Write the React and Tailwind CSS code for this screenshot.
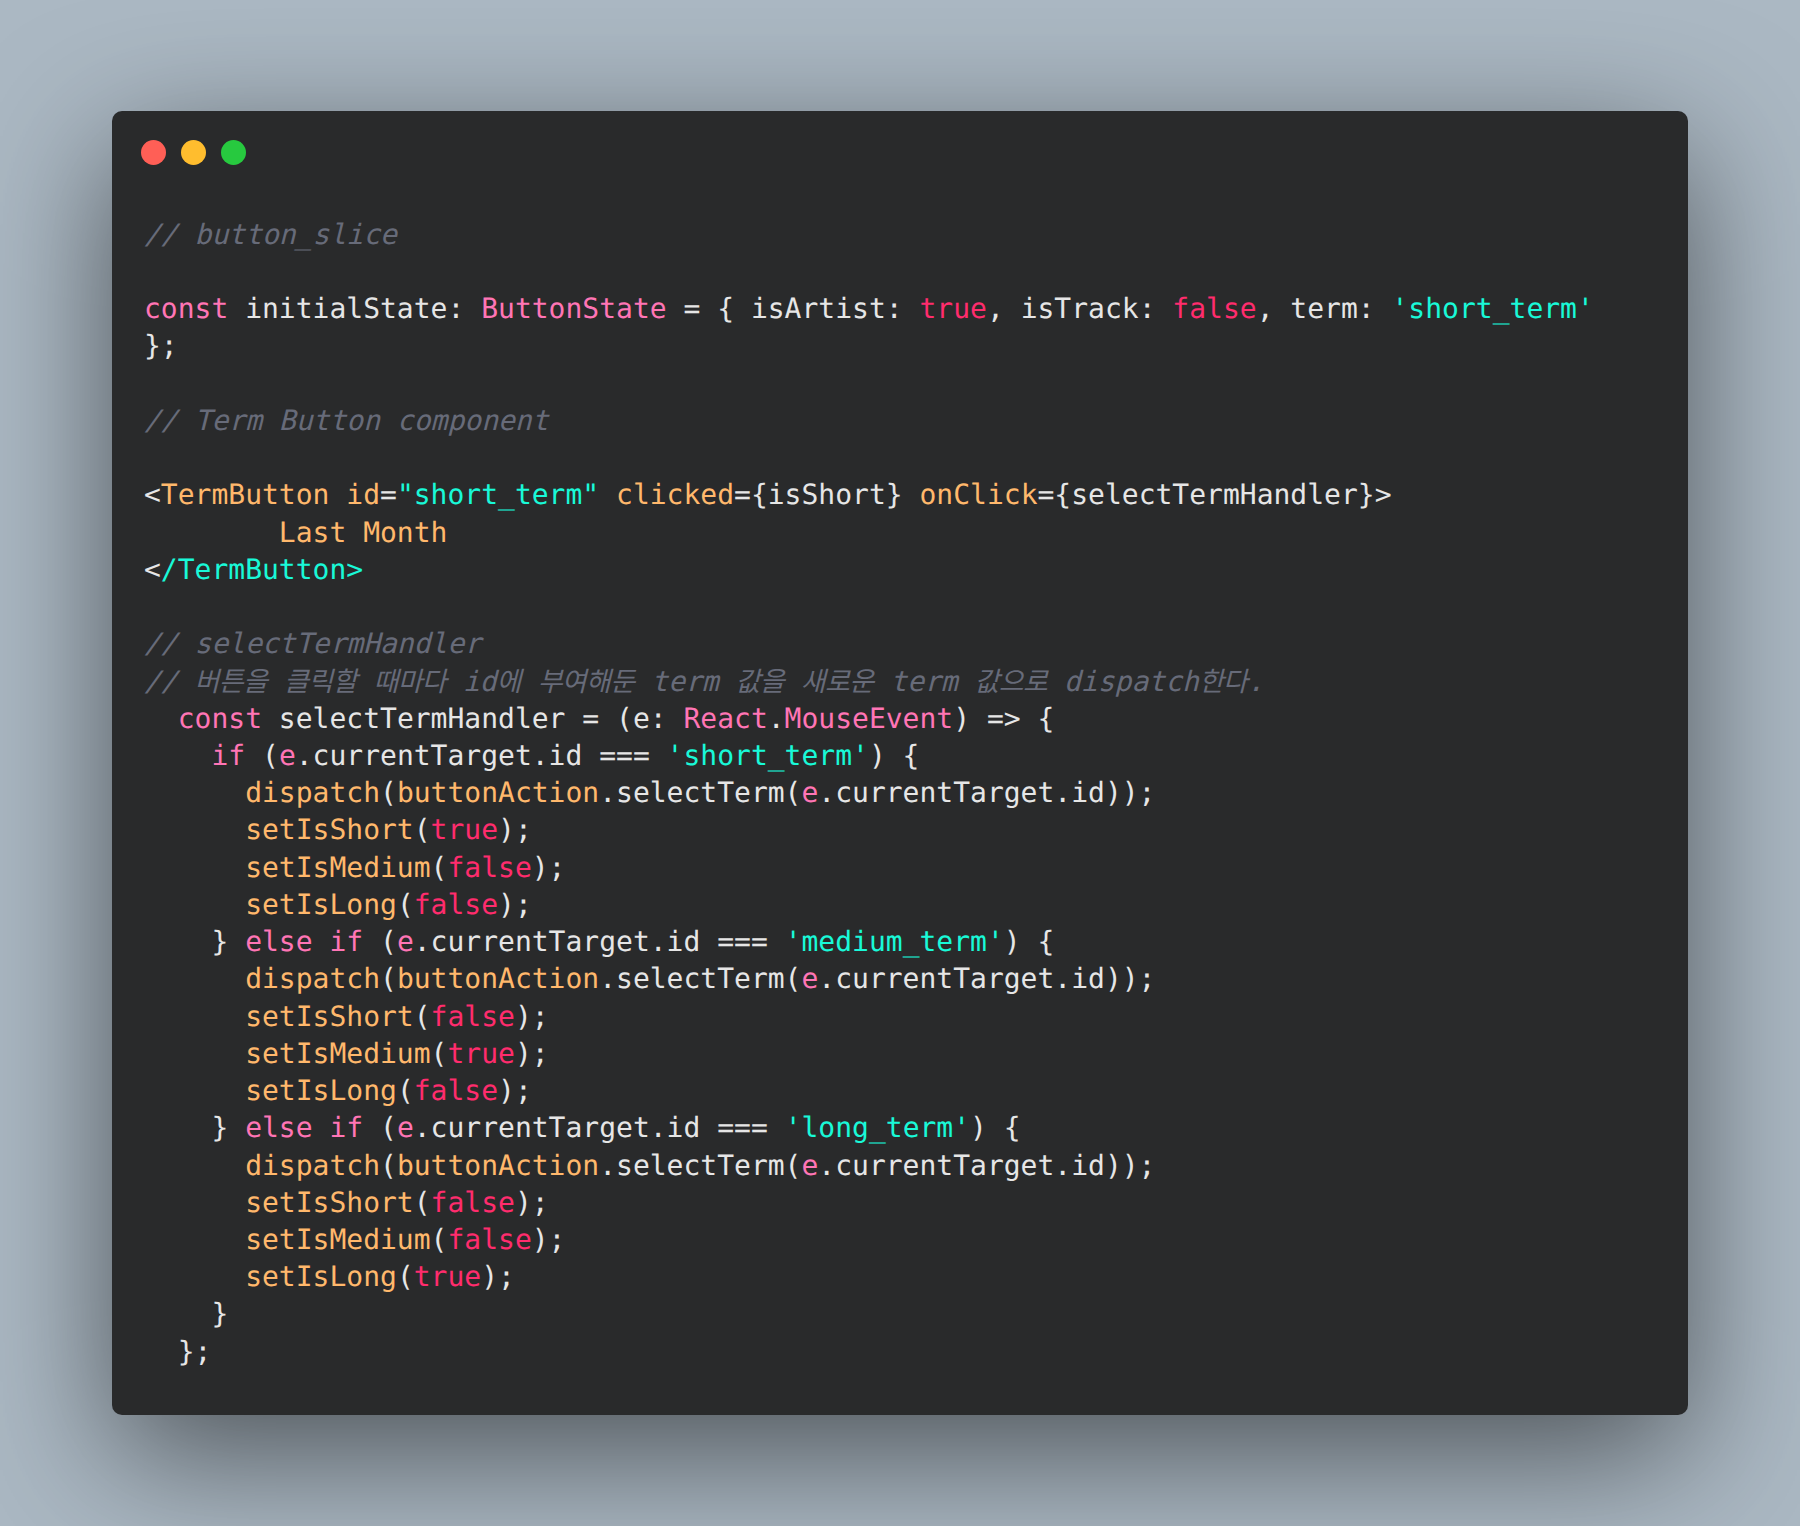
const pink = "text-[#ff75b5]";
const red = "text-[#ff2c6d]";
const orange = "text-[#ffb86c]";
const teal = "text-[#19f9d8]";
const gray = "text-[#676b79]";

// hangul runs sit a little tighter than the mono cell
const Hangul = ({ children }) => (
  <span className="text-[27px] tracking-[-0.65px]">{children}</span>
);

const Comment = ({ children }) => (
  <span className={`${gray} inline-block skew-x-[-14deg] origin-[0_28px]`}>{children}</span>
);

const code = [
  [["// button_slice", "comment"]],
  [],
  [["const", pink], [" initialState: "], ["ButtonState", pink], [" = { isArtist: "], ["true", red], [", isTrack: "], ["false", red], [", term: "], ["'short_term'", teal]],
  [["};"]],
  [],
  [["// Term Button component", "comment"]],
  [],
  [["<"], ["TermButton id", orange], ["="], ["\"short_term\"", teal], [" "], ["clicked", orange], ["={isShort} "], ["onClick", orange], ["={selectTermHandler}>"]],
  [["        Last Month", orange]],
  [["<"], ["/TermButton>", teal]],
  [],
  [["// selectTermHandler", "comment"]],
  "korean",
  [["  "], ["const", pink], [" selectTermHandler = (e: "], ["React", pink], ["."], ["MouseEvent", pink], [") => {"]],
  [["    "], ["if", pink], [" ("], ["e", pink], [".currentTarget.id === "], ["'short_term'", teal], [") {"]],
  [["      "], ["dispatch", orange], ["("], ["buttonAction", orange], [".selectTerm("], ["e", pink], [".currentTarget.id));"]],
  [["      "], ["setIsShort", orange], ["("], ["true", red], [");"]],
  [["      "], ["setIsMedium", orange], ["("], ["false", red], [");"]],
  [["      "], ["setIsLong", orange], ["("], ["false", red], [");"]],
  [["    } "], ["else if", pink], [" ("], ["e", pink], [".currentTarget.id === "], ["'medium_term'", teal], [") {"]],
  [["      "], ["dispatch", orange], ["("], ["buttonAction", orange], [".selectTerm("], ["e", pink], [".currentTarget.id));"]],
  [["      "], ["setIsShort", orange], ["("], ["false", red], [");"]],
  [["      "], ["setIsMedium", orange], ["("], ["true", red], [");"]],
  [["      "], ["setIsLong", orange], ["("], ["false", red], [");"]],
  [["    } "], ["else if", pink], [" ("], ["e", pink], [".currentTarget.id === "], ["'long_term'", teal], [") {"]],
  [["      "], ["dispatch", orange], ["("], ["buttonAction", orange], [".selectTerm("], ["e", pink], [".currentTarget.id));"]],
  [["      "], ["setIsShort", orange], ["("], ["false", red], [");"]],
  [["      "], ["setIsMedium", orange], ["("], ["false", red], [");"]],
  [["      "], ["setIsLong", orange], ["("], ["true", red], [");"]],
  [["    }"]],
  [["  };"]],
];

const KoreanComment = () => (
  <Comment>
    {"// "}<Hangul>버튼을</Hangul>{" "}<Hangul>클릭할</Hangul>{" "}<Hangul>때마다</Hangul>{" id"}<Hangul>에</Hangul>{" "}<Hangul>부여해둔</Hangul>{" term "}<Hangul>값을</Hangul>{" "}<Hangul>새로운</Hangul>{" term "}<Hangul>값으로</Hangul>{" dispatch"}<Hangul>한다</Hangul>{"."}
  </Comment>
);

export default function App() {
  return (
    <div className="w-full h-[1526px] overflow-hidden bg-[#abb8c3] pt-[111px] px-[112px]">
      <div className="w-[1576px] h-[1304px] rounded-[10px] bg-[#292a2b] shadow-[0_40px_136px_rgba(0,0,0,0.55)] px-[32px] pt-[29px]">
        <div className="flex gap-[15px] -ml-[3px] mb-[50.7px]">
          <div className="w-[25px] h-[25px] rounded-full bg-[#ff5f56]" />
          <div className="w-[25px] h-[25px] rounded-full bg-[#ffbd2e]" />
          <div className="w-[25px] h-[25px] rounded-full bg-[#27c93f]" />
        </div>
        <pre className="font-['DejaVu_Sans_Mono','Noto_Sans_CJK_KR',monospace] text-[28px] leading-[37.24px] text-[#e6e6e6] [text-rendering:geometricPrecision]">
          {code.map((line, i) => (
            <div key={i} className="h-[37.24px]">
              {line === "korean" ? (
                <KoreanComment />
              ) : (
                line.map(([text, color], j) =>
                  color === "comment" ? (
                    <Comment key={j}>{text}</Comment>
                  ) : (
                    <span key={j} className={color}>{text}</span>
                  )
                )
              )}
            </div>
          ))}
        </pre>
      </div>
    </div>
  );
}
